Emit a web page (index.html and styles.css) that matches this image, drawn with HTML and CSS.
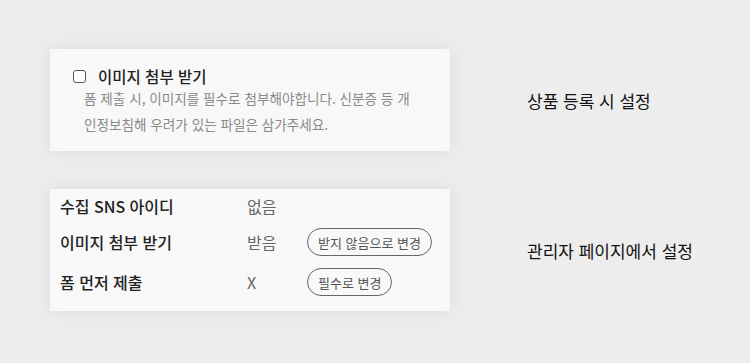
FILE: index.html
```html
<!DOCTYPE html>
<html lang="ko">
<head>
  <meta charset="UTF-8" />
  <meta name="viewport" content="width=device-width, initial-scale=1.0"/>
  <title>이미지 첨부 설정</title>
  <link rel="stylesheet" href="styles.css">
</head>
<body>

  <div class="section">
    <div class="card card-form">
      <label class="check-row">
        <span class="checkbox"></span>
        <span class="check-title">이미지 첨부 받기</span>
      </label>
      <p class="desc">폼 제출 시, 이미지를 필수로 첨부해야합니다. 신분증 등 개인정보침해 우려가 있는 파일은 삼가주세요.</p>
    </div>
    <div class="label">상품 등록 시 설정</div>
  </div>

  <div class="section">
    <div class="card card-admin">
      <div class="row row-1">
        <span class="key">수집 SNS 아이디</span>
        <span class="val">없음</span>
      </div>
      <div class="row row-2">
        <span class="key">이미지 첨부 받기</span>
        <span class="val">받음</span>
        <button class="pill">받지 않음으로 변경</button>
      </div>
      <div class="row row-3">
        <span class="key">폼 먼저 제출</span>
        <span class="val">X</span>
        <button class="pill">필수로 변경</button>
      </div>
    </div>
    <div class="label">관리자 페이지에서 설정</div>
  </div>

</body>
</html>
```

FILE: styles.css
```css
body {
  margin: 0;
  padding: 49px 0 0 50px;
  background: #ededed;
  font-family: "Noto Sans CJK KR", "Noto Sans", sans-serif;
  color: #222;
}

.section {
  display: flex;
  align-items: center;
  margin-bottom: 38px;
}

.card {
  width: 400px;
  box-sizing: border-box;
  background: #f8f8f8;
  box-shadow: 0 0 18px rgba(0, 0, 0, 0.08);
}

.card-form {
  height: 102px;
  padding: 17px 20px 0 23px;
}

.check-row {
  display: flex;
  align-items: center;
  gap: 12px;
}

.checkbox {
  width: 11px;
  height: 11px;
  border: 1.5px solid #555;
  border-radius: 3px;
  background: #fff;
}

.check-title {
  font-size: 15.5px;
  font-weight: 500;
  line-height: 20px;
}

.desc {
  margin: -1px 0 0 11px;
  width: 330px;
  font-size: 13.6px;
  line-height: 26px;
  color: #8a8a8a;
}

.card-admin {
  padding: 0 10px 8px;
}

.row {
  display: flex;
  align-items: center;
  font-size: 16px;
}

.row-1 { height: 34px; }
.row-2 { height: 38px; }
.row-3 { height: 42px; }

.key {
  width: 187px;
  font-weight: 500;
}

.val {
  width: 60px;
  color: #666;
}

.pill {
  height: 28px;
  padding: 0 10px;
  border: 1px solid #666;
  border-radius: 14px;
  background: transparent;
  font-family: inherit;
  font-size: 13px;
  color: #555;
}

.label {
  margin-left: 77px;
  font-size: 17px;
  color: #111;
}
```
